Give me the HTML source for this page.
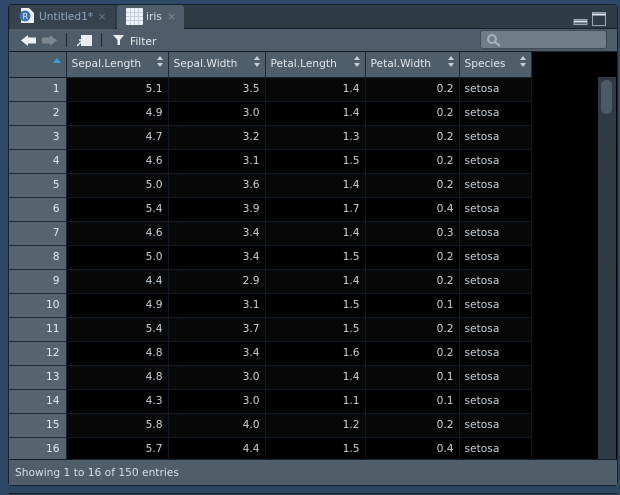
<!DOCTYPE html>
<html><head><meta charset="utf-8"><style>
html,body{margin:0;padding:0}
body{width:620px;height:495px;overflow:hidden;position:relative;background:linear-gradient(#2e4a68,#2c4560);font-family:"DejaVu Sans",sans-serif;font-size:10.65px;color:#d5dee6}
.a{position:absolute}
#panel{left:8px;top:4px;width:610px;height:482px;background:#000;border:1px solid #16232f;border-radius:4px;box-sizing:border-box;overflow:hidden}
#tabs{left:9px;top:5px;width:608px;height:24px;background:#2f3b45;border-bottom:1px solid #15212c;box-sizing:border-box}
.tab{height:24px;box-sizing:border-box;border-radius:3px 3px 0 0;line-height:23px}
#tb{left:9px;top:29px;width:608px;height:22px;background:#4e5d69}
#hdrb{left:9px;top:51px;width:608px;height:1px;background:#15212c}
table{position:absolute;left:9px;top:52px;border-collapse:collapse;table-layout:fixed;width:522px}
th{height:24px;padding:0 0 2px 5px;background:#4e5e6b;border-right:1px solid #1a2a3a;border-bottom:1px solid #15212c;font-weight:normal;text-align:left;position:relative;color:#dfe6ec;box-sizing:border-box}
td{height:24px;padding:0 5px 1px;box-sizing:border-box;border-right:1px solid #0f1a27;border-bottom:1px solid #0f1a27;background:#000;text-align:right;color:#c7d1d9;line-height:22px}
tr.o td{background:#080808}
td.r{background:#56646f!important;color:#e3e9ee;border-bottom:1px solid #1d2c3a;border-right:1px solid #15212c;padding-right:6px}
td.s{text-align:left}
.sort{position:absolute;right:5px;top:4px;width:6px;height:11px}
#foot{left:9px;top:459px;width:608px;height:26px;background:#4f5e69;border-top:1px solid #15212c;box-sizing:border-box;line-height:26px;padding-left:6px;color:#d5dee6}
#sb{left:598px;top:77px;width:18px;height:382px;background:#2f3a42}
#th{left:601px;top:80px;width:11px;height:34px;background:#4a5a66;border-radius:5px}
#search{left:480px;top:30px;width:127px;height:19px;background:#6e7d88;border:1px solid #3f4c57;border-radius:3px;box-sizing:border-box}
.sep{width:1px;background:#1e2a35;top:33px;height:14px}
</style></head><body>
<div class="a" id="panel"></div>
<div class="a" id="tabs"></div>
<div class="a tab" style="left:10px;top:5px;width:105px;background:#36434e;color:#8aa4c4;padding-left:29px">Untitled1* <span style="color:#6b7882;margin-left:1px">×</span></div>
<div class="a tab" style="left:117px;top:5px;width:67px;height:24px;background:#4e5d69;color:#d5dee6;padding-left:29px">iris <span style="color:#7d8a94;margin-left:2px">×</span></div>
<svg class="a" style="left:18px;top:7px" width="17" height="18"><path d="M3 1H11L16 6V16H3Z" fill="#eef2f6"/><circle cx="7" cy="9" r="5.5" fill="#3f6fb5"/><text x="4.5" y="12" font-size="8" fill="#e8eef5" font-family="DejaVu Sans">R</text></svg>
<svg class="a" style="left:126px;top:8px" width="17" height="17"><rect width="17" height="17" rx="1" fill="#eef2f6"/><path d="M0 4.500H17M0 8.500H17M0 12.500H17M4.500 0V17M8.500 0V17M12.500 0V17" stroke="#c4cfda" stroke-width="1"/></svg>
<svg class="a" style="left:572px;top:11px" width="34" height="16"><path d="M2 8.500H15V13.500H2Z" fill="#5c6a75" stroke="#9aa6af"/><path d="M2 10.500H15" stroke="#dfe6ec" stroke-width="1.500"/><rect x="20.500" y="1.500" width="13" height="13" fill="none" stroke="#9aa6af"/><path d="M20.500 3.500H33.500" stroke="#dfe6ec" stroke-width="2"/></svg>
<div class="a" id="tb"></div>
<div class="a" id="hdrb"></div>
<svg class="a" style="left:21px;top:34px" width="38" height="13"><path d="M0 6.500L7 1V3.500H15V9.500H7V12Z" fill="#eef2f5"/><path d="M36 6.500L29 1V3.500H21V9.500H29V12Z" fill="#7c8993"/></svg>
<div class="a sep" style="left:66px"></div>
<svg class="a" style="left:77px;top:34px" width="16" height="13"><path d="M4 1H15V12H4Z" fill="#e8edf1"/><path d="M0 12L5 7M2 6H6V10" stroke="#e8edf1" stroke-width="1.500" fill="none"/></svg>
<div class="a sep" style="left:101px"></div>
<svg class="a" style="left:113px;top:35px" width="12" height="11"><path d="M0 0H11L7 5V10H4.500V5Z" fill="#e8edf1"/></svg>
<div class="a" style="left:130px;top:35px;line-height:14px;color:#e3e9ee">Filter</div>
<div class="a" id="search"></div>
<svg class="a" style="left:486px;top:33px" width="16" height="14"><circle cx="6" cy="6" r="4" fill="none" stroke="#a7b2ba" stroke-width="2"/><path d="M9 9L14 13" stroke="#a7b2ba" stroke-width="2"/></svg>
<table>
<colgroup><col style="width:57px"><col style="width:102px"><col style="width:97px"><col style="width:100px"><col style="width:94px"><col style="width:72px"></colgroup>
<tr><th style="height:25px"><svg class="a" style="left:44px;top:6px" width="8" height="5"><path d="M4 0L8 5H0Z" fill="#3c9be0"/></svg></th>
<th>Sepal.Length<svg class="sort" viewBox="0 0 6 11"><path d="M3 0L6 4H0ZM3 11L6 7H0Z" fill="#c6d0d8"/></svg></th>
<th>Sepal.Width<svg class="sort" viewBox="0 0 6 11"><path d="M3 0L6 4H0ZM3 11L6 7H0Z" fill="#c6d0d8"/></svg></th>
<th>Petal.Length<svg class="sort" viewBox="0 0 6 11"><path d="M3 0L6 4H0ZM3 11L6 7H0Z" fill="#c6d0d8"/></svg></th>
<th>Petal.Width<svg class="sort" viewBox="0 0 6 11"><path d="M3 0L6 4H0ZM3 11L6 7H0Z" fill="#c6d0d8"/></svg></th>
<th>Species<svg class="sort" viewBox="0 0 6 11"><path d="M3 0L6 4H0ZM3 11L6 7H0Z" fill="#c6d0d8"/></svg></th></tr>
<tr class="o"><td class="r">1</td><td>5.1</td><td>3.5</td><td>1.4</td><td>0.2</td><td class="s">setosa</td></tr>
<tr><td class="r">2</td><td>4.9</td><td>3.0</td><td>1.4</td><td>0.2</td><td class="s">setosa</td></tr>
<tr class="o"><td class="r">3</td><td>4.7</td><td>3.2</td><td>1.3</td><td>0.2</td><td class="s">setosa</td></tr>
<tr><td class="r">4</td><td>4.6</td><td>3.1</td><td>1.5</td><td>0.2</td><td class="s">setosa</td></tr>
<tr class="o"><td class="r">5</td><td>5.0</td><td>3.6</td><td>1.4</td><td>0.2</td><td class="s">setosa</td></tr>
<tr><td class="r">6</td><td>5.4</td><td>3.9</td><td>1.7</td><td>0.4</td><td class="s">setosa</td></tr>
<tr class="o"><td class="r">7</td><td>4.6</td><td>3.4</td><td>1.4</td><td>0.3</td><td class="s">setosa</td></tr>
<tr><td class="r">8</td><td>5.0</td><td>3.4</td><td>1.5</td><td>0.2</td><td class="s">setosa</td></tr>
<tr class="o"><td class="r">9</td><td>4.4</td><td>2.9</td><td>1.4</td><td>0.2</td><td class="s">setosa</td></tr>
<tr><td class="r">10</td><td>4.9</td><td>3.1</td><td>1.5</td><td>0.1</td><td class="s">setosa</td></tr>
<tr class="o"><td class="r">11</td><td>5.4</td><td>3.7</td><td>1.5</td><td>0.2</td><td class="s">setosa</td></tr>
<tr><td class="r">12</td><td>4.8</td><td>3.4</td><td>1.6</td><td>0.2</td><td class="s">setosa</td></tr>
<tr class="o"><td class="r">13</td><td>4.8</td><td>3.0</td><td>1.4</td><td>0.1</td><td class="s">setosa</td></tr>
<tr><td class="r">14</td><td>4.3</td><td>3.0</td><td>1.1</td><td>0.1</td><td class="s">setosa</td></tr>
<tr class="o"><td class="r">15</td><td>5.8</td><td>4.0</td><td>1.2</td><td>0.2</td><td class="s">setosa</td></tr>
<tr><td class="r">16</td><td>5.7</td><td>4.4</td><td>1.5</td><td>0.4</td><td class="s">setosa</td></tr>
</table>
<div class="a" id="sb"></div>
<div class="a" id="th"></div>
<div class="a" id="foot">Showing 1 to 16 of 150 entries</div>
<div class="a" style="left:9px;top:493px;width:608px;height:2px;background:#2f3b45;border-top:1px solid #15212c;box-sizing:border-box"></div>
</body></html>
